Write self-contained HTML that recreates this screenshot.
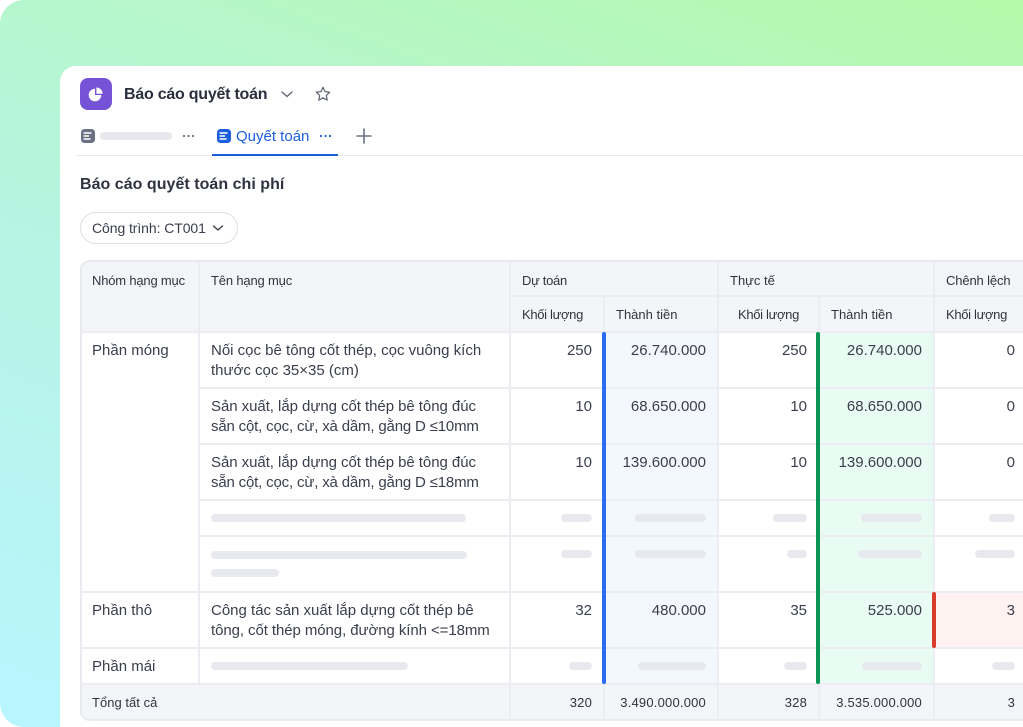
<!DOCTYPE html>
<html lang="vi"><head><meta charset="utf-8"><title>Báo cáo quyết toán</title>
<style>
*{box-sizing:border-box}
html,body{margin:0;padding:0;background:#fff}
body{width:1023px;height:727px;overflow:hidden;position:relative;font-family:"Liberation Sans",sans-serif;color:#3a3e4c}
div,span.a,svg{position:absolute}
#bg{left:0;top:0;width:1023px;height:727px;border-radius:24px 0 0 24px;background:linear-gradient(20deg,#b8f5ff 0%,#b6f4e4 45%,#b5f9ab 100%)}
#card{left:60px;top:66px;width:963px;height:661px;background:#fff;border-radius:16px 0 0 0}
.t{white-space:nowrap;font-size:15px;line-height:20px;margin-top:1px}
.r{text-align:right;width:140px}
.h{font-size:13px;line-height:16px;color:#30343f}
.f{font-size:13px;line-height:16px;color:#30343f;letter-spacing:.2px}
.s{background:#e8e9ef;border-radius:4px;height:8px}
.vl{background:#ebedf2;width:2px}
.hl{background:#ebedf2;height:2px}
</style></head><body>
<div id="bg"></div><div id="card"></div>

<!-- header -->
<div style="left:80px;top:78px;width:32px;height:32px;border-radius:8px;background:#7653d6"></div>
<svg style="left:87px;top:85px" width="18" height="18" viewBox="0 0 18 18"><path d="M8 3.700A6.300 6.300 0 1 0 14.300 10H8Z" fill="#fff"/><path d="M9.400 2.500A6.200 6.200 0 0 1 15.600 8.700H9.400Z" fill="#fff"/></svg>
<div class="t" style="left:124px;top:84px;font-size:16px;font-weight:bold;color:#2b2f3d;letter-spacing:-.24px">Báo cáo quyết toán</div>
<svg style="left:279px;top:86px" width="16" height="16" viewBox="0 0 16 16"><path d="M3 6l5 4.500 5-4.500" fill="none" stroke="#5d6271" stroke-width="1.300" stroke-linecap="round" stroke-linejoin="round"/></svg>
<svg style="left:315px;top:86px" width="16" height="16" viewBox="0 0 16 16"><path d="M8 1.300l2 4.300 4.700.6-3.400 3.200.9 4.700L8 11.800l-4.200 2.300.9-4.700L1.300 6.200 6 5.600Z" fill="none" stroke="#5d6271" stroke-width="1.200" stroke-linejoin="round"/></svg>

<!-- tabs -->
<svg style="left:81px;top:129px" width="14" height="14" viewBox="0 0 14 14"><rect width="14" height="14" rx="3.500" fill="#6b7184"/><path d="M3 4h7M3 7h4.500M3 10h6" stroke="#fff" stroke-width="1.400" stroke-linecap="round"/></svg>
<div class="s" style="left:100px;top:132px;width:72px"></div>
<svg style="left:182px;top:134px" width="13" height="4" viewBox="0 0 13 4"><circle cx="2" cy="2" r="1.100" fill="#6b7184"/><circle cx="6.500" cy="2" r="1.100" fill="#6b7184"/><circle cx="11" cy="2" r="1.100" fill="#6b7184"/></svg>
<svg style="left:217px;top:129px" width="14" height="14" viewBox="0 0 14 14"><rect width="14" height="14" rx="3.500" fill="#1c5fde"/><path d="M3 4h7M3 7h4.500M3 10h6" stroke="#fff" stroke-width="1.400" stroke-linecap="round"/></svg>
<div class="t" style="left:236px;top:126px;color:#1c5fde">Quyết toán</div>
<svg style="left:319px;top:134px" width="13" height="4" viewBox="0 0 13 4"><circle cx="2" cy="2" r="1.100" fill="#1c5fde"/><circle cx="6.500" cy="2" r="1.100" fill="#1c5fde"/><circle cx="11" cy="2" r="1.100" fill="#1c5fde"/></svg>
<svg style="left:356px;top:128px" width="16" height="16" viewBox="0 0 16 16"><path d="M8 1v14M1 8h14" stroke="#6b7184" stroke-width="1.600" stroke-linecap="round"/></svg>
<div style="left:76px;top:155px;width:947px;height:1px;background:#e6e8ef"></div>
<div style="left:212px;top:154px;width:126px;height:2px;background:#1c5fde"></div>

<div class="t" style="left:80px;top:174px;font-size:16px;font-weight:bold;color:#2f3341;letter-spacing:.03px">Báo cáo quyết toán chi phí</div>

<!-- chip -->
<div style="left:80px;top:212px;width:158px;height:32px;border:1px solid #dcdee6;border-radius:16px"></div>
<div class="t" style="left:92px;top:217px;font-size:14px;letter-spacing:-.08px">Công trình: CT001</div>
<svg style="left:211px;top:221px" width="14" height="14" viewBox="0 0 14 14"><path d="M2.500 5l4.500 4 4.500-4" fill="none" stroke="#373b49" stroke-width="1.300" stroke-linecap="round" stroke-linejoin="round"/></svg>

<!-- table -->
<div style="left:80px;top:260px;width:960px;height:461px;border:2px solid #e8eaf0;border-radius:10px;overflow:hidden;background:#fff">
  <div style="left:-2px;top:-2px;width:960px;height:72px;background:#f4f5f9"></div>
  <div style="left:-2px;top:422px;width:960px;height:38px;background:#f4f5f9"></div>
  <div style="left:524px;top:70px;width:112px;height:352px;background:#f3f8ff"></div>
  <div style="left:738px;top:70px;width:114px;height:352px;background:#e9fcf4"></div>
  <div style="left:854px;top:330px;width:100px;height:56px;background:#fff2f0"></div>
</div>

<!-- horizontal lines -->
<div class="hl" style="left:510px;top:295px;width:513px"></div>
<div class="hl" style="left:81px;top:331px;width:942px"></div>
<div class="hl" style="left:199px;top:387px;width:824px"></div>
<div class="hl" style="left:199px;top:443px;width:824px"></div>
<div class="hl" style="left:199px;top:499px;width:824px"></div>
<div class="hl" style="left:199px;top:535px;width:824px"></div>
<div class="hl" style="left:81px;top:591px;width:942px"></div>
<div class="hl" style="left:81px;top:647px;width:942px"></div>
<div class="hl" style="left:81px;top:683px;width:942px"></div>

<!-- vertical lines -->
<div class="vl" style="left:198px;top:262px;height:422px"></div>
<div class="vl" style="left:509px;top:262px;height:458px"></div>
<div class="vl" style="left:603px;top:296px;height:424px"></div>
<div class="vl" style="left:717px;top:262px;height:458px"></div>
<div class="vl" style="left:818px;top:296px;height:424px"></div>
<div class="vl" style="left:933px;top:262px;height:458px"></div>

<!-- accent bars -->
<div style="left:602px;top:332px;width:4px;height:352px;background:#2b6cf0;border-radius:2px"></div>
<div style="left:816px;top:332px;width:4px;height:352px;background:#0a9455;border-radius:2px"></div>
<div style="left:932px;top:592px;width:4px;height:56px;background:#d93a2b;border-radius:2px"></div>

<!-- table header text -->
<div class="t h" style="left:92px;top:272px;letter-spacing:-.19px">Nhóm hạng mục</div>
<div class="t h" style="left:211px;top:272px;letter-spacing:-.17px">Tên hạng mục</div>
<div class="t h" style="left:522px;top:272px;letter-spacing:-.3px">Dự toán</div>
<div class="t h" style="left:730px;top:272px">Thực tế</div>
<div class="t h" style="left:946px;top:272px;letter-spacing:-.13px">Chênh lệch</div>
<div class="t h" style="left:522px;top:306px;letter-spacing:-.32px">Khối lượng</div>
<div class="t h" style="left:616px;top:306px">Thành tiền</div>
<div class="t h" style="left:738px;top:306px;letter-spacing:-.32px">Khối lượng</div>
<div class="t h" style="left:831px;top:306px">Thành tiền</div>
<div class="t h" style="left:946px;top:306px;letter-spacing:-.32px">Khối lượng</div>

<!-- first columns -->
<div class="t" style="left:92px;top:340px">Phần móng</div>
<div class="t" style="left:92px;top:600px">Phần thô</div>
<div class="t" style="left:92px;top:656px">Phần mái</div>
<div class="t" style="left:211px;top:340px">Nối cọc bê tông cốt thép, cọc vuông kích</div>
<div class="t" style="left:211px;top:360px">thước cọc 35×35 (cm)</div>
<div class="t" style="left:211px;top:396px;letter-spacing:-.05px">Sản xuất, lắp dựng cốt thép bê tông đúc</div>
<div class="t" style="left:211px;top:416px;letter-spacing:-.17px">sẵn cột, cọc, cừ, xà dầm, gằng D ≤10mm</div>
<div class="t" style="left:211px;top:452px;letter-spacing:-.05px">Sản xuất, lắp dựng cốt thép bê tông đúc</div>
<div class="t" style="left:211px;top:472px;letter-spacing:-.17px">sẵn cột, cọc, cừ, xà dầm, gằng D ≤18mm</div>
<div class="t" style="left:211px;top:600px">Công tác sản xuất lắp dựng cốt thép bê</div>
<div class="t" style="left:211px;top:620px;letter-spacing:-.08px">tông, cốt thép móng, đường kính &lt;=18mm</div>

<!-- numbers -->
<div class="t r" style="left:452px;top:340px">250</div><div class="t r" style="left:566px;top:340px">26.740.000</div><div class="t r" style="left:667px;top:340px">250</div><div class="t r" style="left:782px;top:340px">26.740.000</div><div class="t r" style="left:875px;top:340px">0</div>
<div class="t r" style="left:452px;top:396px">10</div><div class="t r" style="left:566px;top:396px">68.650.000</div><div class="t r" style="left:667px;top:396px">10</div><div class="t r" style="left:782px;top:396px">68.650.000</div><div class="t r" style="left:875px;top:396px">0</div>
<div class="t r" style="left:452px;top:452px">10</div><div class="t r" style="left:566px;top:452px">139.600.000</div><div class="t r" style="left:667px;top:452px">10</div><div class="t r" style="left:782px;top:452px">139.600.000</div><div class="t r" style="left:875px;top:452px">0</div>
<div class="t r" style="left:452px;top:600px">32</div><div class="t r" style="left:566px;top:600px">480.000</div><div class="t r" style="left:667px;top:600px">35</div><div class="t r" style="left:782px;top:600px">525.000</div><div class="t r" style="left:875px;top:600px">3</div>

<!-- skeletons -->
<div class="s" style="left:211px;top:514px;width:255px"></div>
<div class="s" style="left:561px;top:514px;width:31px"></div><div class="s" style="left:635px;top:514px;width:71px"></div><div class="s" style="left:773px;top:514px;width:34px"></div><div class="s" style="left:861px;top:514px;width:61px"></div><div class="s" style="left:989px;top:514px;width:26px"></div>
<div class="s" style="left:211px;top:551px;width:256px"></div><div class="s" style="left:211px;top:569px;width:68px"></div>
<div class="s" style="left:561px;top:550px;width:31px"></div><div class="s" style="left:635px;top:550px;width:71px"></div><div class="s" style="left:787px;top:550px;width:20px"></div><div class="s" style="left:858px;top:550px;width:64px"></div><div class="s" style="left:975px;top:550px;width:40px"></div>
<div class="s" style="left:211px;top:662px;width:197px"></div>
<div class="s" style="left:569px;top:662px;width:23px"></div><div class="s" style="left:638px;top:662px;width:68px"></div><div class="s" style="left:784px;top:662px;width:23px"></div><div class="s" style="left:862px;top:662px;width:60px"></div><div class="s" style="left:992px;top:662px;width:23px"></div>

<!-- footer -->
<div class="t f" style="left:92px;top:694px;letter-spacing:.03px">Tổng tất cả</div>
<div class="t f r" style="left:452px;top:694px">320</div>
<div class="t f r" style="left:566px;top:694px">3.490.000.000</div>
<div class="t f r" style="left:667px;top:694px">328</div>
<div class="t f r" style="left:782px;top:694px">3.535.000.000</div>
<div class="t f r" style="left:875px;top:694px">3</div>
</body></html>
